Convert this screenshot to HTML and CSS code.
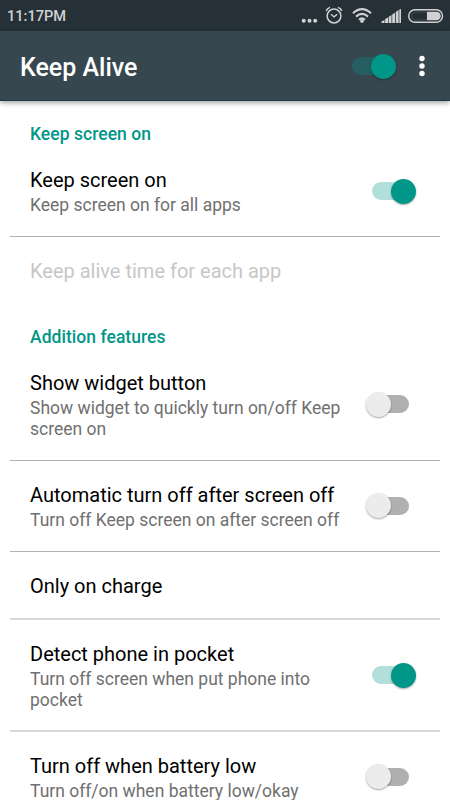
FILE: index.html
```
<!DOCTYPE html>
<html lang="en">
<head>
<meta charset="utf-8">
<title>Keep Alive</title>
<link rel="stylesheet" href="styles.css">
</head>
<body>
<div class="screen">
  <div class="status">
    <span class="clock">11:17PM</span>
    <svg class="status-icons" width="150" height="31" viewBox="300 0 150 31" fill="none" stroke="#cfd1d2">
      <g fill="#cfd1d2" stroke="none"><circle cx="303.7" cy="20.7" r="2"/><circle cx="309.5" cy="20.7" r="2"/><circle cx="315.2" cy="20.7" r="2"/></g>
      <circle cx="334" cy="16" r="6.9" stroke-width="1.5"/>
      <path d="M331 14.2l3 2.7 3.2-2.7" stroke-width="1.4"/>
      <path d="M326.2 11q.8-2.600 3.800-3.600M338 7.400q3 1 3.800 3.600" stroke-width="1.500"/>
      <path d="M353 13.200q9-8.200 18 0M356 16.600q6-5.400 12 0M359 19.700q3-2.700 6 0" stroke-width="2.100"/>
      <circle cx="362" cy="20.900" r="1.900" fill="#cfd1d2" stroke="none"/>
      <path fill="#cfd1d2" stroke="none" d="M381.500 23v-1.500l3-1.500v3zM385.100 23v-4l2.900-1.500V23zM388.600 23v-6l2.900-2v8zM392.200 23v-8.500l2.800-1.800V23zM395.800 23V12l2.800-2v13zM399.300 23V10.300q0-1.300 1.700-1.300V23z"/>
      <rect x="408.700" y="9.700" width="33.800" height="12.600" rx="6.300" stroke-width="1.400"/>
      <path d="M427 11.800h9.500a4.200 4.200 0 0 1 0 8.400H427z" fill="#cfd1d2" stroke="none"/>
      <path d="M427 12h-11.500a4 4 0 0 0 0 8H427" stroke="#3d4a51" stroke-width="1"/>
    </svg>
  </div>
  <header class="appbar">
    <h1>Keep Alive</h1>
    <span class="switch on dark"><i></i></span>
    <svg class="more" width="8" height="24" viewBox="0 0 8 24" fill="#fff"><circle cx="4" cy="4.500" r="2.700"/><circle cx="4" cy="12" r="2.700"/><circle cx="4" cy="19.500" r="2.700"/></svg>
  </header>
  <main>
    <h2>Keep screen on</h2>
    <div class="row">
      <div class="text"><div class="title">Keep screen on</div><div class="summary">Keep screen on for all apps</div></div>
      <span class="switch on"><i></i></span>
    </div>
    <hr>
    <div class="row disabled"><div class="text"><div class="title">Keep alive time for each app</div></div></div>
    <h2>Addition features</h2>
    <div class="row">
      <div class="text"><div class="title">Show widget button</div><div class="summary">Show widget to quickly turn on/off Keep screen on</div></div>
      <span class="switch"><i></i></span>
    </div>
    <hr>
    <div class="row">
      <div class="text"><div class="title">Automatic turn off after screen off</div><div class="summary">Turn off Keep screen on after screen off</div></div>
      <span class="switch"><i></i></span>
    </div>
    <hr>
    <div class="row"><div class="text"><div class="title">Only on charge</div></div></div>
    <hr class="soft">
    <div class="row">
      <div class="text"><div class="title">Detect phone in pocket</div><div class="summary">Turn off screen when put phone into pocket</div></div>
      <span class="switch on"><i></i></span>
    </div>
    <hr class="soft">
    <div class="row">
      <div class="text"><div class="title">Turn off when battery low</div><div class="summary">Turn off/on when battery low/okay</div></div>
      <span class="switch"><i></i></span>
    </div>
  </main>
</div>
</body>
</html>
```
FILE: styles.css
```
* { box-sizing: border-box; }
body { margin: 0; background: #fff; font-family: Roboto, sans-serif; }
h1, h2 { margin: 0; font-weight: 500; }
.screen { height: 800px; overflow: hidden; display: flex; flex-direction: column; }
.status {
  flex: none; height: 31px; background: #263137; color: #cfd1d2;
  display: flex; align-items: center; justify-content: space-between; padding-left: 7px;
}
.clock { font-size: 14.6px; font-weight: 500; line-height: 31px; padding-top: 2px; }
.status-icons { display: block; }
.appbar {
  flex: none; height: 70px; padding: 0 24px 0 20px;
  display: flex; align-items: center;
  background: #37474f; color: #fff; border-bottom: 1px solid #1d3944;
  box-shadow: 0 2px 5px rgba(0, 0, 0, .35); z-index: 1;
}
h1 { flex: 1; font-size: 25px; line-height: 30px; padding-top: 4px; }
.appbar .switch, .more { margin-top: 1px; }
.more { margin-left: 22.500px; }
main { flex: none; }
h2 { height: 45px; padding: 22px 30px 0; font-size: 17.5px; line-height: 22px; color: #009688; letter-spacing: .04px; }
.row {
  display: flex; align-items: center; justify-content: space-between;
  min-height: 66.5px; padding: 22px 34.5px 20px 30px;
}
.text { width: 318px; }
.title { font-size: 20px; line-height: 24px; color: #000; }
.summary { font-size: 17.5px; line-height: 21px; padding-top: 3px; color: #707070; }
.disabled .title { color: #c7c7c7; }
hr { margin: 0 10px; border: 0; height: 1px; background: #b2b2b2; }
hr.soft { height: 2px; margin-bottom: -.5px; background: #d9d9d9; }
hr.soft ~ hr.soft { margin-top: -.5px; }
.switch {
  flex: none; display: flex; align-items: center;
  width: 50px; height: 26px; position: relative;
}
.row .switch { margin-bottom: 2px; }
.switch::before {
  content: ""; position: absolute; left: 6.500px; right: 6.500px; top: 4px; height: 18px;
  border-radius: 9px; background: #b0b0b0;
}
.switch i {
  position: relative; width: 25px; height: 25px; border-radius: 50%;
  background: #ececec; box-shadow: 0 1px 2px rgba(0, 0, 0, .35);
}
.switch.on { justify-content: flex-end; }
.switch.on::before { background: #b2dfdb; }
.switch.on i { background: #009688; }
.switch.dark::before { background: #265f61; }
```
